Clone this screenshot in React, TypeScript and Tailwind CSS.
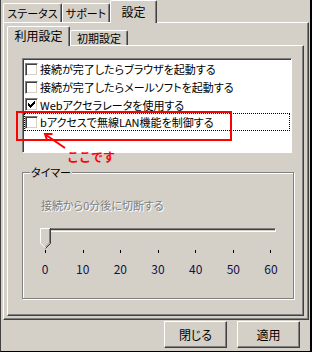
import React from 'react';

const options = [
  { label: '接続が完了したらブラウザを起動する', checked: false, h: 'h-[18px]', focus: false },
  { label: '接続が完了したらメールソフトを起動する', checked: false, h: 'h-[18px]', focus: false },
  { label: 'Webアクセラレータを使用する', checked: true, h: 'h-[17px]', focus: false },
  { label: 'bアクセスで無線LAN機能を制御する', checked: false, h: 'h-[18px]', focus: true },
];

const marks = ['0', '10', '20', '30', '40', '50', '60'];

function CheckBox({ checked }: { checked: boolean }) {
  return (
    <span className="flex h-[13px] w-[13px] shrink-0 items-center justify-center border border-t-[#808080] border-l-[#808080] border-r-white border-b-white bg-white shadow-[inset_1px_1px_0_#404040,inset_-1px_-1px_0_#d4d0c8]">
      {checked && (
        <svg width="7" height="7" viewBox="0 0 7 7" shapeRendering="crispEdges">
          <rect x="0" y="2" width="1" height="3" fill="#000" />
          <rect x="1" y="3" width="1" height="3" fill="#000" />
          <rect x="2" y="4" width="1" height="3" fill="#000" />
          <rect x="3" y="3" width="1" height="3" fill="#000" />
          <rect x="4" y="2" width="1" height="3" fill="#000" />
          <rect x="5" y="1" width="1" height="3" fill="#000" />
          <rect x="6" y="0" width="1" height="3" fill="#000" />
        </svg>
      )}
    </span>
  );
}

function Thumb() {
  return (
    <svg width="11" height="21" viewBox="0 0 11 21" shapeRendering="crispEdges" className="absolute left-0 top-0">
      <polygon points="0,0 11,0 11,15 5.5,21 0,15" fill="#d4d0c8" />
      <path d="M0.5 15 V0.5 H10" stroke="#fff" fill="none" />
      <path d="M10.5 0 V15.5 L5.5 20.5" stroke="#404040" fill="none" shapeRendering="auto" />
      <path d="M9.5 1 V15 L5.5 19" stroke="#808080" fill="none" shapeRendering="auto" />
      <path d="M0.5 15 L5 19.5" stroke="#fff" fill="none" shapeRendering="auto" />
    </svg>
  );
}

export default function App() {
  return (
    <div className="relative h-[352px] w-[312px] overflow-hidden border-l border-r-2 border-b border-l-[#404040] border-r-black border-b-black bg-[#d4d0c8] font-['Noto_Sans_CJK_JP','Noto_Sans_CJK_SC',sans-serif] text-[11px] text-black [font-feature-settings:'palt']">
      {/* outer tabs */}
      <div className="flex h-[22px] items-end pl-[2px]">
        <div className="flex h-[19px] w-[59px] items-center justify-center rounded-t-[2px] border-l border-t border-r border-l-white border-t-white border-r-[#404040] pt-[1px] shadow-[inset_-1px_0_0_#808080]">
          ステータス
        </div>
        <div className="flex h-[19px] w-[48px] items-center justify-center rounded-t-[2px] border-l border-t border-r border-l-white border-t-white border-r-[#404040] pt-[1px] shadow-[inset_-1px_0_0_#808080]">
          サポート
        </div>
        <div className="relative z-10 -mb-px flex h-[23px] w-[47px] items-center justify-center rounded-t-[2px] border-l border-t border-r border-l-white border-t-white border-r-[#404040] bg-[#d4d0c8] pb-[1px] text-[12px] shadow-[inset_-1px_0_0_#808080]">
          設定
        </div>
      </div>

      {/* outer panel */}
      <div className="ml-[2px] h-[298px] w-[306px] border border-t-white border-l-white border-r-[#404040] border-b-[#404040] shadow-[inset_-1px_-1px_0_#808080]">
        {/* inner tabs */}
        <div className="ml-[3px] flex h-[22px] items-end">
          <div className="relative z-10 -mb-px flex h-[20px] w-[63px] items-center justify-center rounded-t-[2px] border-l border-t border-r border-l-white border-t-white border-r-[#404040] bg-[#d4d0c8] pb-[1px] text-[12px] shadow-[inset_-1px_0_0_#808080]">
            利用設定
          </div>
          <div className="flex h-[15px] w-[58px] items-center justify-center rounded-t-[2px] border-l border-t border-r border-l-white border-t-white border-r-[#404040] leading-none shadow-[inset_-1px_0_0_#808080]">
            初期設定
          </div>
        </div>

        {/* inner panel */}
        <div className="ml-[3px] h-[271px] w-[297px] border border-t-white border-l-white border-r-[#404040] border-b-[#404040] shadow-[inset_-1px_-1px_0_#808080]">
          {/* list */}
          <div className="ml-[14px] mt-[12px] h-[95px] w-[270px] border border-t-[#808080] border-l-[#808080] border-r-white border-b-white bg-white p-[1px] shadow-[inset_1px_1px_0_#404040]">
            {options.map((o) => (
              <div
                key={o.label}
                className={`${o.h} flex items-center gap-[2px] pl-[1px] whitespace-nowrap ${o.focus ? 'outline-1 -outline-offset-1 outline-dotted outline-black' : ''}`}
              >
                <CheckBox checked={o.checked} />
                <span className="pt-[1px] leading-none">{o.label}</span>
              </div>
            ))}
          </div>

          {/* timer group */}
          <div className="relative ml-[14px] mt-[19px] h-[127px] w-[272px] border border-[#808080] shadow-[inset_1px_1px_0_#fff,1px_1px_0_#fff]">
            <span className="absolute left-[7px] top-[-8px] bg-[#d4d0c8] px-[1px] leading-[14px]">タイマー</span>
            <div className="ml-[18px] mt-[24px] leading-[16px] text-[#808080] [text-shadow:1px_1px_0_#fff]">
              接続から0分後に切断する
            </div>
            <div className="relative ml-[17px] mt-[15px] h-[21px] w-[237px]">
              <div className="ml-[5px] mt-[7px] h-[4px] w-[231px] border border-t-[#808080] border-l-[#808080] border-r-white border-b-white shadow-[inset_1px_1px_0_#404040]" />
              <Thumb />
            </div>
            <div className="ml-[22px] mt-[1px] flex h-[3px] w-[226px] justify-between">
              {marks.map((m) => (
                <span key={m} className="h-[3px] w-[1px] bg-black" />
              ))}
            </div>
            <div className="ml-[22px] mt-[9px] flex h-[14px] w-[226px] justify-between text-[12px] leading-[14px] text-[#10104a]">
              {marks.map((m) => (
                <span key={m} className="flex w-0 justify-center whitespace-nowrap">
                  {m}
                </span>
              ))}
            </div>
          </div>
        </div>
      </div>

      {/* buttons */}
      <div className="mt-[1px] flex justify-end gap-[10px] pr-[10px]">
        <button className="flex h-[27px] w-[63px] items-center justify-center border border-t-white border-l-white border-r-[#404040] border-b-[#404040] text-[12px] shadow-[inset_-1px_-1px_0_#808080]">
          閉じる
        </button>
        <button className="flex h-[27px] w-[63px] items-center justify-center border border-t-white border-l-white border-r-[#404040] border-b-[#404040] text-[12px] shadow-[inset_-1px_-1px_0_#808080]">
          適用
        </button>
      </div>

      {/* annotation */}
      <div className="absolute left-[15px] top-[111px] h-[30px] w-[216px] border-2 border-[#ff0000]" />
      <svg className="absolute left-[39px] top-[128px]" width="30" height="24" viewBox="0 0 30 24">
        <path d="M25 20 L6 7" stroke="#ff0000" strokeWidth="2" fill="none" />
        <path d="M7.4 13 L5 6 L12.5 6" stroke="#ff0000" strokeWidth="2" fill="none" />
      </svg>
      <span className="absolute left-[66px] top-[150px] text-[12px] font-bold leading-[14px] text-[#ff0000] [font-feature-settings:normal]">
        ここです
      </span>
    </div>
  );
}
